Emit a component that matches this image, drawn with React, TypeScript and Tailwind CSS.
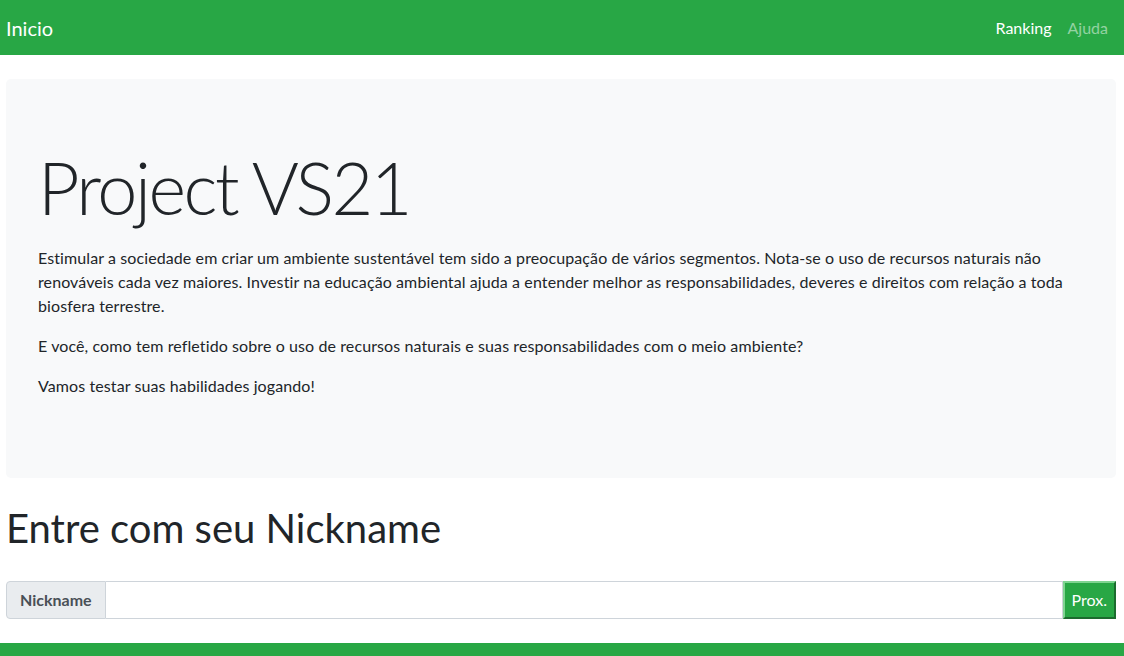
export default function App() {
  return (
    <div
      className="min-h-[656px] bg-white text-[#212529] flex flex-col"
      style={{ fontFamily: '"Segoe UI", Lato, sans-serif' }}
    >
      {/* Navbar */}
      <nav className="h-[55px] bg-[#28a745] flex items-center justify-between pl-[6px] pr-[16px]">
        <a className="text-[20px] text-white">Inicio</a>
        <div className="flex gap-[16px] text-[16px]">
          <a className="text-white">Ranking</a>
          <a className="text-white/50">Ajuda</a>
        </div>
      </nav>

      <main className="flex-1 pl-[6px] pr-[8px] pt-[24px]">
        {/* Jumbotron */}
        <section className="bg-[#f8f9fa] rounded-[5px] px-[32px] pt-[64px] pb-[64px]">
          <h1 className="text-[72px] font-light leading-[1.2] tracking-[-2.5px] mb-[16px] pt-[1px]">Project VS21</h1>
          <div className="text-[16px] leading-[24px] tracking-[0.1px] space-y-[16px] mb-[16px]">
            <p>
              Estimular a sociedade em criar um ambiente sustentável tem sido a preocupação de vários segmentos. Nota-se o uso de recursos naturais não renováveis cada vez maiores. Investir na educação ambiental ajuda a entender melhor as responsabilidades, deveres e direitos com relação a toda biosfera terrestre.
            </p>
            <p>
              E você, como tem refletido sobre o uso de recursos naturais e suas responsabilidades com o meio ambiente?
            </p>
            <p>Vamos testar suas habilidades jogando!</p>
          </div>
        </section>

        <h2 className="text-[40px] leading-[1.2] mt-[26px] mb-[29px]">Entre com seu Nickname</h2>

        <div className="flex h-[38px]">
          <span className="flex items-center px-[13px] bg-[#e9ecef] border border-[#ced4da] rounded-l-[4px] font-bold text-[#495057] text-[16px]">
            Nickname
          </span>
          <input className="flex-1 border border-[#ced4da] border-l-0 outline-none px-[12px]" />
          <button className="bg-[#28a745] text-white px-[7px] border-t-2 border-l-2 border-t-[#7fd491] border-l-[#7fd491] border-b-2 border-r-2 border-b-[#1c6b2e] border-r-[#1c6b2e]">
            Prox.
          </button>
        </div>
      </main>

      <footer className="h-[13px] bg-[#28a745] mt-[24px]" />
    </div>
  );
}
